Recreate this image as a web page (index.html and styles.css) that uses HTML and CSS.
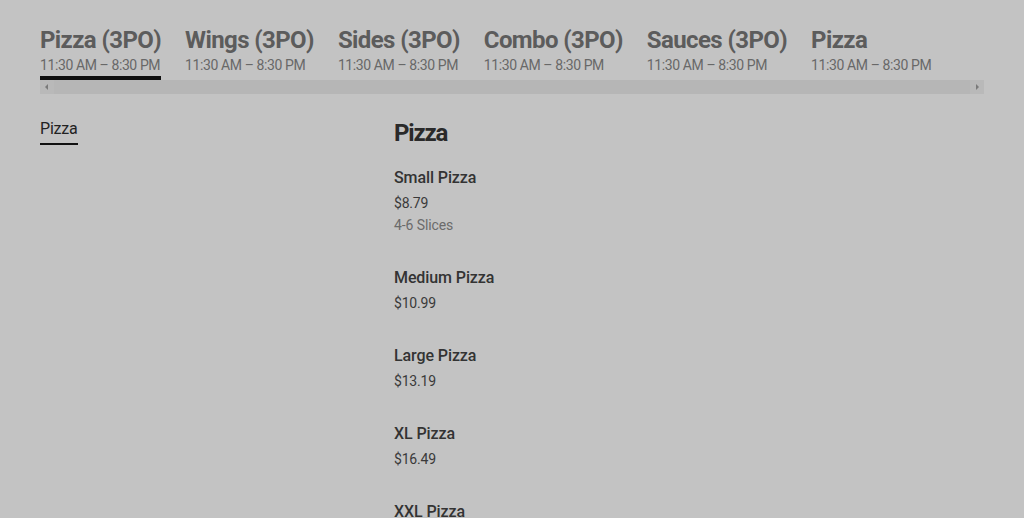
FILE: index.html
```html
<!DOCTYPE html>
<html>
<head>
<meta charset="utf-8">
<link rel="stylesheet" href="styles.css">
</head>
<body>
<div class="page">
  <div class="tabs-wrap">
    <div class="tabs">
      <div class="tab active"><div class="tab-title">Pizza (3PO)</div><div class="tab-time">11:30 AM – 8:30 PM</div></div>
      <div class="tab"><div class="tab-title">Wings (3PO)</div><div class="tab-time">11:30 AM – 8:30 PM</div></div>
      <div class="tab"><div class="tab-title">Sides (3PO)</div><div class="tab-time">11:30 AM – 8:30 PM</div></div>
      <div class="tab"><div class="tab-title">Combo (3PO)</div><div class="tab-time">11:30 AM – 8:30 PM</div></div>
      <div class="tab"><div class="tab-title">Sauces (3PO)</div><div class="tab-time">11:30 AM – 8:30 PM</div></div>
      <div class="tab"><div class="tab-title">Pizza</div><div class="tab-time">11:30 AM – 8:30 PM</div></div>
    </div>
    <div class="scrollbar">
      <span class="arrow left"></span>
      <span class="thumb"></span>
      <span class="arrow right"></span>
    </div>
  </div>
  <div class="content">
    <nav class="side">
      <a class="side-link">Pizza</a>
    </nav>
    <section class="menu">
      <h2 class="menu-title">Pizza</h2>
      <div class="item">
        <div class="item-name">Small Pizza</div>
        <div class="item-price">$8.79</div>
        <div class="item-desc">4-6 Slices</div>
      </div>
      <div class="item">
        <div class="item-name">Medium Pizza</div>
        <div class="item-price">$10.99</div>
      </div>
      <div class="item">
        <div class="item-name">Large Pizza</div>
        <div class="item-price">$13.19</div>
      </div>
      <div class="item">
        <div class="item-name">XL Pizza</div>
        <div class="item-price">$16.49</div>
      </div>
      <div class="item">
        <div class="item-name">XXL Pizza</div>
      </div>
    </section>
  </div>
</div>
</body>
</html>
```

FILE: styles.css
```css
html, body {
  margin: 0;
  padding: 0;
  background: #c3c3c3;
  font-family: "Roboto", "Liberation Sans", sans-serif;
  overflow: hidden;
  height: 518px;
}
.page {
  padding: 24px 40px 0 40px;
}
.tabs-wrap {
  width: 944px;
}
.tabs {
  display: flex;
  gap: 24px;
  white-space: nowrap;
}
.tab {
  display: flex;
  flex-direction: column;
  padding-bottom: 2px;
  border-bottom: 4px solid transparent;
}
.tab.active {
  border-bottom-color: #111;
}
.tab-title {
  font-size: 24px;
  font-weight: 700;
  line-height: 32px;
  letter-spacing: -0.6px;
  color: #5c5c5c;
}
.tab-time {
  font-size: 14px;
  line-height: 18px;
  color: #686868;
  letter-spacing: -0.4px;
}
.scrollbar {
  height: 14px;
  background: #b9b9b9;
  display: flex;
  align-items: center;
}
.thumb {
  flex: 1;
  height: 14px;
  background: #b6b6b6;
}
.arrow {
  width: 14px;
  height: 14px;
  position: relative;
}
.arrow::after {
  content: "";
  position: absolute;
  top: 4px;
  width: 0;
  height: 0;
  border-top: 3px solid transparent;
  border-bottom: 3px solid transparent;
}
.arrow.left::after {
  left: 5px;
  border-right: 3px solid #7a7a7a;
}
.arrow.right::after {
  left: 6px;
  border-left: 3px solid #7a7a7a;
}
.content {
  display: flex;
  padding-top: 24px;
}
.side {
  width: 354px;
  flex: none;
}
.side-link {
  display: inline-block;
  font-size: 16px;
  line-height: 22px;
  color: #222;
  padding-bottom: 3px;
  border-bottom: 2px solid #111;
  letter-spacing: -0.2px;
}
.menu {
  flex: 1;
}
.menu-title {
  margin: 0 0 18px 0;
  font-size: 24px;
  font-weight: 700;
  line-height: 30px;
  letter-spacing: -1.2px;
  color: #2a2a2a;
}
.item {
  margin-bottom: 30px;
}
.item-name {
  font-size: 16px;
  font-weight: 500;
  line-height: 24px;
  color: #333;
  letter-spacing: -0.1px;
}
.item-price {
  margin-top: 2px;
  font-size: 14px;
  line-height: 22px;
  color: #3a3a3a;
  letter-spacing: -0.2px;
}
.item-desc {
  font-size: 14px;
  line-height: 22px;
  color: #6b6b6b;
  letter-spacing: -0.1px;
}
```
